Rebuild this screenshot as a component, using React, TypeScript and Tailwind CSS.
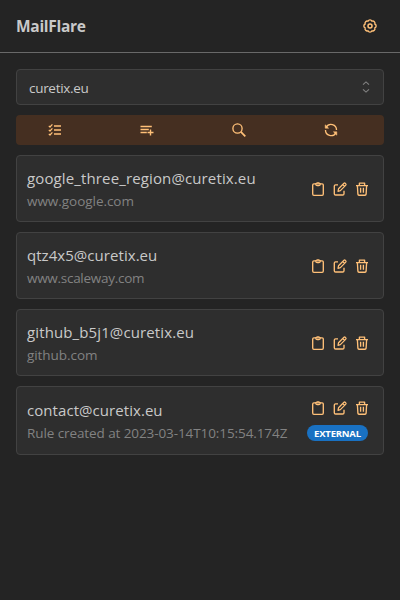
import React from "react";

function Icon({ children }: { children: React.ReactNode }) {
  return (
    <svg className="size-4 shrink-0" viewBox="0 0 16 16" fill="none" stroke="#ffc078" strokeWidth="1.35" strokeLinejoin="round">
      {children}
    </svg>
  );
}

const Gear = () => (
  <Icon>
    <path d="M6 3.2A2.15 2.15 0 0 1 10 3.2A2.15 2.15 0 0 1 12.8 6A2.15 2.15 0 0 1 12.8 10A2.15 2.15 0 0 1 10 12.8A2.15 2.15 0 0 1 6 12.8A2.15 2.15 0 0 1 3.2 10A2.15 2.15 0 0 1 3.2 6A2.15 2.15 0 0 1 6 3.2Z" />
    <circle cx="8" cy="8" r="2" strokeWidth="1.5" />
  </Icon>
);
const Checklist = () => (
  <Icon>
    <path d="M7 4H14M7 8H14M7 12H14" strokeWidth="1.5" />
    <path d="M1.8 3.8 3 5 5.4 2.4M1.8 7.8 3 9 5.4 6.4M1.8 11.8 3 13 5.4 10.4" strokeWidth="1.2" />
  </Icon>
);
const ListPlus = () => (
  <Icon>
    <path d="M1.5 4.5H12.8M1.5 7.5H9.8M1.5 10.5H7.8M11.5 7.5V13.5M8.5 10.5H14.5" strokeWidth="1.4" />
  </Icon>
);
const Search = () => (
  <Icon>
    <circle cx="6.5" cy="6.5" r="4.6" />
    <path d="M9.9 9.9 14.3 14.3" strokeWidth="1.7" />
  </Icon>
);
const Refresh = () => (
  <Icon>
    <path d="M3.2 5.2A5.5 5.5 0 0 1 13.5 8M12.8 10.8A5.5 5.5 0 0 1 2.5 8" />
    <path d="M2.2 2.8V6.2H5.6ZM13.8 13.2V9.8H10.4Z" fill="#ffc078" strokeWidth=".5" />
  </Icon>
);
const Clipboard = () => (
  <Icon>
    <rect x="2.7" y="2.9" width="10.6" height="11.4" rx="1.2" />
    <path d="M5.8 2.7V3.4Q5.8 4.6 7.2 4.6H8.8Q10.2 4.6 10.2 3.4V2.7Q9.5 2.5 9 1.9H7Q6.5 2.5 5.8 2.7Z" strokeWidth="1.2" />
  </Icon>
);
const Edit = () => (
  <Icon>
    <path d="M6 3.8H3.6Q2.3 3.8 2.3 5.1V12.7Q2.3 14 3.6 14H10.7Q12 14 12 12.7V9.8" />
    <path d="M6 10.3 6.5 7.8 12 2.3Q12.6 1.7 13.2 2.3L13.8 2.9Q14.4 3.5 13.8 4.1L8.4 9.6ZM10.7 3.6 12.5 5.4" strokeWidth="1.25" />
  </Icon>
);
const Trash = () => (
  <Icon>
    <path d="M2 4.6H14M3.4 4.8 3.9 13.1Q4 14.2 5 14.2H11Q12 14.2 12.1 13.1L12.6 4.8M5.4 4.4V2.1H10.6V4.4M6.6 6.8V11.8M9.4 6.8V11.8" />
  </Icon>
);

const rules = [
  { email: "google_three_region@curetix.eu", note: "www.google.com", emailFit: "tracking-[0.13px]", noteFit: "tracking-[-0.04px]" },
  { email: "qtz4x5@curetix.eu", note: "www.scaleway.com", emailFit: "tracking-[0.05px]", noteFit: "tracking-[-0.28px]" },
  { email: "github_b5j1@curetix.eu", note: "github.com", emailFit: "tracking-[0.12px]", noteFit: "tracking-[-0.06px]" },
  { email: "contact@curetix.eu", note: "Rule created at 2023-03-14T10:15:54.174Z", emailFit: "tracking-[0.06px]", noteFit: "tracking-[-0.09px]", external: true },
];

export default function App() {
  return (
    <div className="h-[600px] w-[400px] overflow-hidden bg-[#242424] font-['Open_Sans','Noto_Sans',sans-serif] text-[#c9c9c9]">
      <header className="flex h-[53px] items-center justify-between border-b border-[#696969] pr-[22px] pl-4">
        <h1 className="pt-0.5 text-[15.5px] font-bold tracking-[-0.28px]">MailFlare</h1>
        <button><Gear /></button>
      </header>
      <main className="flex flex-col gap-2.5 px-4 pt-4">
        <div className="flex h-9 items-center justify-between rounded border border-[#424242] bg-[#2e2e2e] px-3">
          <span className="pt-0.5 text-[13.5px] tracking-[-0.3px]">curetix.eu</span>
          <svg className="h-3.5 w-2.5" viewBox="0 0 10 14" fill="none" stroke="#828282" strokeWidth="1.1">
            <path d="M2 4.7 5 1.9 8 4.7M2 9.3 5 12.1 8 9.3" />
          </svg>
        </div>
        <nav className="grid h-[30px] grid-cols-4 items-center rounded bg-[#452f21]">
          <button className="pl-[31px]"><Checklist /></button>
          <button className="pl-[31px]"><ListPlus /></button>
          <button className="pl-[31px]"><Search /></button>
          <button className="pl-[31px]"><Refresh /></button>
        </nav>
        {rules.map((rule) => (
          <section
            key={rule.email}
            className={`flex items-center justify-between rounded border border-[#424242] bg-[#2e2e2e] pl-2.5 ${rule.external ? "h-[69px]" : "h-[67px]"}`}
          >
            <div className="whitespace-nowrap">
              <div className={`text-[15px] leading-[25px] ${rule.emailFit}`}>{rule.email}</div>
              <div className={`text-[13.5px] leading-[21px] text-[#828282] ${rule.noteFit}`}>{rule.note}</div>
            </div>
            <div className="flex flex-col items-end gap-[9px]">
              <div className="flex gap-1.5 pr-[13px]">
                <Clipboard />
                <Edit />
                <Trash />
              </div>
              {rule.external && (
                <div className="mr-[15px] flex h-4 w-[61px] items-center justify-center rounded-full bg-[#1971c2] pt-px text-[9.5px] leading-none font-bold tracking-[-0.2px] text-white">EXTERNAL</div>
              )}
            </div>
          </section>
        ))}
      </main>
    </div>
  );
}
